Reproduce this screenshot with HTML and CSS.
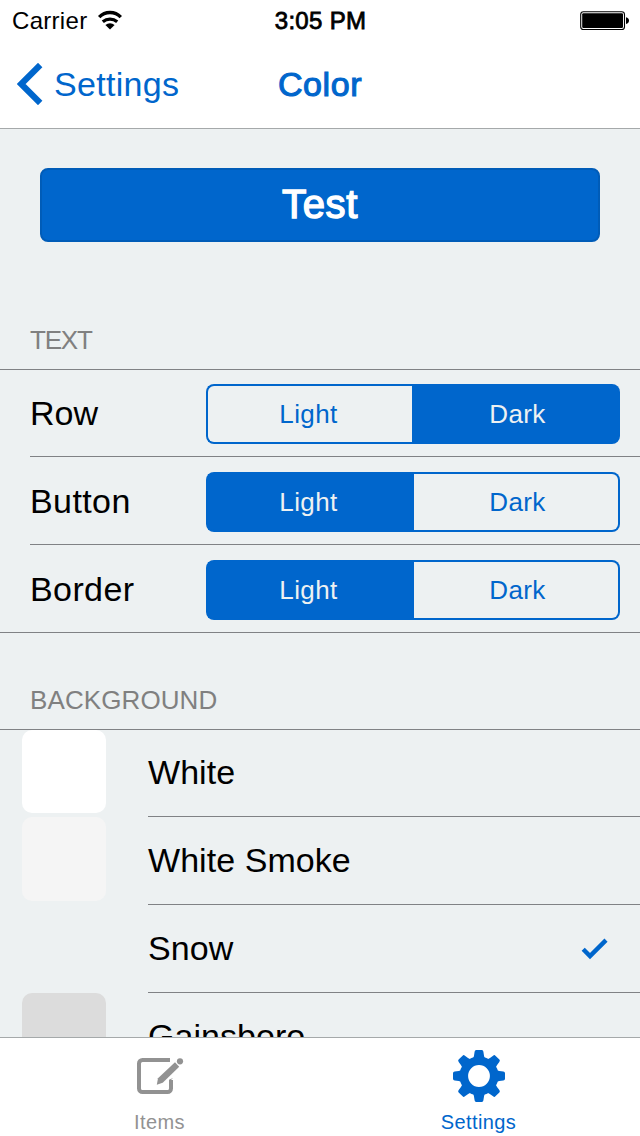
FILE: index.html
```html
<!DOCTYPE html>
<html lang="en">
<head>
<meta charset="utf-8">
<title>Color</title>
<link rel="stylesheet" href="styles.css">
</head>
<body>
<div class="screen">
  <header class="top">
    <div class="status">
      <div class="carrier"><span class="carrier-name">Carrier</span>
        <svg class="wifi" width="26" height="20" viewBox="0 0 26 20"><g fill="none" stroke="#000" stroke-width="3.3"><path d="M2.2 7.2a14.8 14.8 0 0 1 21.6 0"/><path d="M5.8 11.7a11.3 11.3 0 0 1 14.4 0"/></g><path d="M8.4 14.9a7 7 0 0 1 9.2 0L13 19.4z"/></svg>
      </div>
      <span class="time">3:05 PM</span>
      <div class="battery"><svg width="49" height="20" viewBox="0 0 49 20"><rect x=".7" y=".7" width="43.8" height="17.8" rx="2.8" fill="#fff" stroke="#000" stroke-width="1.1"/><rect x="2.2" y="2.2" width="40.8" height="14.8" rx="1.2"/><path d="M46 6.2q3 .6 3 3.4t-3 3.4z"/></svg></div>
    </div>
    <nav class="nav">
      <a class="back"><svg width="26" height="42" viewBox="0 0 26 42"><path d="M23.2 2 4.2 21l19 19" fill="none" stroke="#0066cc" stroke-width="6.2"/></svg><span class="back-text">Settings</span></a>
      <h1 class="title">Color</h1>
    </nav>
  </header>
  <main class="content">
    <button class="test"><span>Test</span></button>
    <h2 class="heading heading-text">TEXT</h2>
    <section class="group">
      <div class="row"><span class="label">Row</span><div class="segments"><span class="segment">Light</span><span class="segment on">Dark</span></div></div>
      <div class="row"><span class="label wide">Button</span><div class="segments"><span class="segment on">Light</span><span class="segment">Dark</span></div></div>
      <div class="row"><span class="label wide">Border</span><div class="segments"><span class="segment on">Light</span><span class="segment">Dark</span></div></div>
    </section>
    <h2 class="heading heading-bg">BACKGROUND</h2>
    <section class="colors">
      <div class="color"><i class="swatch white"></i><div class="name">White</div></div>
      <div class="color"><i class="swatch smoke"></i><div class="name">White Smoke</div></div>
      <div class="color"><i class="swatch snow"></i><div class="name">Snow<svg class="check" width="28" height="22" viewBox="0 0 28 22"><path d="M2.2 11.3 9 18.1 25 2.1" fill="none" stroke="#0066cc" stroke-width="4.4"/></svg></div></div>
      <div class="color"><i class="swatch gainsboro"></i><div class="name">Gainsboro</div></div>
    </section>
  </main>
  <footer class="tabs">
    <a class="tab">
      <svg width="54" height="54" viewBox="1 0 54 54"><path d="M38 11H10.5a3.5 3.5 0 0 0-3.5 3.5v25a3.5 3.5 0 0 0 3.5 3.5h25a3.5 3.5 0 0 0 3.5-3.5V31" fill="none" stroke="#929292" stroke-width="4"/><path d="M41 29l-4 4v-2.2z" fill="#929292"/><path d="M43 13.3l4.2 4.4-16.5 16-5.9 2 1.2-6.4z" fill="#929292"/><circle cx="48" cy="12.3" r="3.1" fill="#929292"/></svg>
      <span class="tab-text">Items</span>
    </a>
    <a class="tab active">
      <svg width="54" height="54" viewBox="-27 -27 54 54"><defs><path id="tooth" d="M-6-17Q-4.8-20-4.4-24.3-4.3-26-2.8-26h5.6q1.5 0 1.6 1.7Q4.8-20 6-17z"/></defs><g fill="#0066cc"><use href="#tooth"/><use href="#tooth" transform="rotate(45)"/><use href="#tooth" transform="rotate(90)"/><use href="#tooth" transform="rotate(135)"/><use href="#tooth" transform="rotate(180)"/><use href="#tooth" transform="rotate(225)"/><use href="#tooth" transform="rotate(270)"/><use href="#tooth" transform="rotate(315)"/></g><circle r="15.2" fill="none" stroke="#0066cc" stroke-width="8.6"/></svg>
      <span class="tab-text">Settings</span>
    </a>
  </footer>
</div>
</body>
</html>
```

FILE: styles.css
```css
* { box-sizing: border-box; }
body { margin: 0; font-family: "Liberation Sans", Arial, sans-serif; color: #000; }
.screen { width: 640px; height: 1136px; overflow: hidden; display: flex; flex-direction: column; background: #edf1f2; }
svg { display: block; flex: none; }

.top { flex: none; height: 129px; background: #fff; border-bottom: 1px solid #a5a9aa; }
.status { height: 40px; display: grid; grid-template-columns: 1fr auto 1fr; align-items: center; padding: 0 11px 0 12px; font-size: 24px; }
.carrier { display: flex; align-items: center; gap: 10px; }
.carrier-name { letter-spacing: 0.3px; padding-top: 1px; }
.time { font-size: 24px; letter-spacing: 0.3px; -webkit-text-stroke: 0.8px #000; padding-top: 1px; }
.battery { display: flex; justify-content: flex-end; padding-top: 2px; }
.nav { height: 88px; display: grid; grid-template-columns: 1fr auto 1fr; align-items: center; padding: 0 17px; font-size: 34px; color: #0066cc; }
.back { display: flex; align-items: center; gap: 11px; }
.back-text { letter-spacing: 0.3px; }
.title { margin: 0; font-size: 34px; font-weight: 400; letter-spacing: 0.6px; -webkit-text-stroke: 1.1px #0066cc; }

.content { flex: 1; min-height: 0; overflow: hidden; display: flex; flex-direction: column; }
.test { flex: none; height: 74px; margin: 39px 40px 0; padding: 0 0 2px; border: 2px solid #005cb8; border-radius: 8px; background: #0066cc; color: #fff; font: 400 40px "Liberation Sans", Arial, sans-serif; letter-spacing: 0.6px; -webkit-text-stroke: 1.4px #fff; }
.heading { flex: none; margin: 0; padding: 0 30px 14px; display: flex; align-items: flex-end; font-size: 26px; line-height: 30px; font-weight: 400; color: #808080; }
.heading-text { height: 127px; letter-spacing: -1.2px; }
.heading-bg { height: 96px; letter-spacing: 0.1px; }

.group { flex: none; border-top: 1px solid #808285; border-bottom: 1px solid #808285; }
.row { height: 88px; margin-left: 30px; padding: 15px 20px 0 0; display: flex; align-items: flex-start; justify-content: space-between; border-bottom: 1px solid #808285; font-size: 34px; }
.row:first-child { height: 87px; padding-top: 14px; }
.row:last-child { height: 87px; border-bottom: 0; }
.label { line-height: 58px; }
.wide { letter-spacing: 0.4px; }
.segments { width: 414px; height: 60px; display: flex; }
.segment { width: 206px; display: flex; align-items: center; justify-content: center; border: 2px solid #0066cc; font-size: 26px; letter-spacing: 0.4px; color: #0066cc; }
.segment:first-child { border-right: 0; border-radius: 8px 0 0 8px; padding-right: 3px; }
.segment:last-child { border-left: 0; border-radius: 0 8px 8px 0; padding-left: 3px; }
.segment.on { width: 208px; background: #0066cc; color: #edf1f2; }
.segment.on:first-child { padding-right: 5px; }
.segment.on:last-child { padding-left: 5px; }

.colors { flex: none; border-top: 1px solid #808285; }
.color { height: 88px; display: flex; padding-left: 22px; }
.color:first-child { height: 87px; }
.color:first-child .name { padding-bottom: 1px; }
.swatch { flex: none; width: 84px; height: 84px; margin-right: 42px; border-radius: 10px; }
.color:first-child .swatch { height: 83px; }
.white { background: #fff; }
.smoke { background: #f5f5f5; }
.snow { background: #edf1f2; }
.gainsboro { background: #dcdcdc; }
.name { flex: 1; padding-right: 31px; display: flex; align-items: center; justify-content: space-between; border-bottom: 1px solid #808285; font-size: 34px; letter-spacing: 0.05px; }

.tabs { flex: none; height: 99px; padding-right: 2px; display: grid; grid-template-columns: 1fr 1fr; border-top: 1px solid #a5a9aa; background: #fff; }
.tab { display: flex; flex-direction: column; align-items: center; padding-top: 11px; color: #929292; font-size: 20px; }
.tab-text { margin-top: 8px; letter-spacing: 0.4px; line-height: 23px; }
.active { color: #0066cc; }
```
